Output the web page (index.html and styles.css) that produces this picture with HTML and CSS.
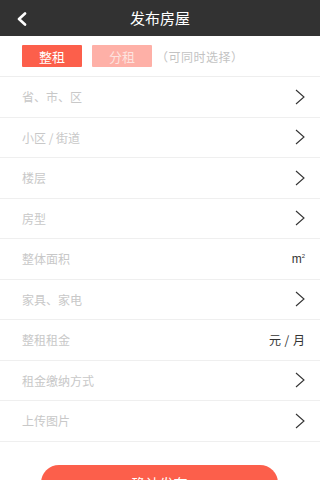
FILE: index.html
```html
<!DOCTYPE html>
<html lang="zh">
<head>
<meta charset="utf-8">
<link rel="stylesheet" href="styles.css">
</head>
<body>
<header class="topbar">
  <span class="back">
    <svg width="12" height="14" viewBox="0 0 12 14"><path d="M9 1.5 L3 7 L9 12.5" fill="none" stroke="#fff" stroke-width="2.6" stroke-linecap="round" stroke-linejoin="round"/></svg>
  </span>
  <h1 class="title">发布房屋</h1>
</header>
<section class="tabs">
  <span class="tab tab-on">整租</span>
  <span class="tab tab-off">分租</span>
  <span class="hint">（可同时选择）</span>
</section>
<ul class="list">
  <li class="row"><span class="label">省、市、区</span><svg class="chev" viewBox="0 0 10 16"><path d="M1 1 L9 8 L1 15" fill="none" stroke="#333" stroke-width="1.1"/></svg></li>
  <li class="row"><span class="label">小区 / 街道</span><svg class="chev" viewBox="0 0 10 16"><path d="M1 1 L9 8 L1 15" fill="none" stroke="#333" stroke-width="1.1"/></svg></li>
  <li class="row"><span class="label">楼层</span><svg class="chev" viewBox="0 0 10 16"><path d="M1 1 L9 8 L1 15" fill="none" stroke="#333" stroke-width="1.1"/></svg></li>
  <li class="row"><span class="label">房型</span><svg class="chev" viewBox="0 0 10 16"><path d="M1 1 L9 8 L1 15" fill="none" stroke="#333" stroke-width="1.1"/></svg></li>
  <li class="row"><span class="label">整体面积</span><span class="unit sq">m<sup>2</sup></span></li>
  <li class="row"><span class="label">家具、家电</span><svg class="chev" viewBox="0 0 10 16"><path d="M1 1 L9 8 L1 15" fill="none" stroke="#333" stroke-width="1.1"/></svg></li>
  <li class="row"><span class="label">整租租金</span><span class="unit">元 / 月</span></li>
  <li class="row"><span class="label">租金缴纳方式</span><svg class="chev" viewBox="0 0 10 16"><path d="M1 1 L9 8 L1 15" fill="none" stroke="#333" stroke-width="1.1"/></svg></li>
  <li class="row"><span class="label">上传图片</span><svg class="chev" viewBox="0 0 10 16"><path d="M1 1 L9 8 L1 15" fill="none" stroke="#333" stroke-width="1.1"/></svg></li>
</ul>
<div class="actions">
  <button class="submit">确认发布</button>
</div>
</body>
</html>
```
FILE: styles.css
```css
* { box-sizing: border-box; }
html, body { margin: 0; padding: 0; }
body {
  width: 320px;
  background: #fff;
  font-family: "Noto Sans CJK SC", "Noto Sans", sans-serif;
  overflow: hidden;
}
.topbar {
  height: 36px;
  background: #323232;
  display: flex;
  align-items: center;
  justify-content: center;
  position: relative;
}
.back {
  position: absolute;
  left: 16px;
  top: 12px;
  display: flex;
}
.title {
  margin: 0;
  color: #fff;
  font-size: 15px;
  font-weight: 400;
  line-height: 36px;
}
.tabs {
  height: 41px;
  display: flex;
  align-items: center;
  padding: 0 0 0 22px;
  gap: 10px;
  border-bottom: 1.5px solid #eeeeee;
}
.tab {
  width: 60px;
  height: 22px;
  display: flex;
  align-items: center;
  justify-content: center;
  color: #fff;
  font-size: 13px;
  border-radius: 1px;
}
.tab-on { background: #fc5f4b; }
.tab-off { background: #feb0a7; color: #fde3df; }
.hint {
  margin-left: -6px;
  color: #c3c3c3;
  font-size: 12px;
  letter-spacing: 0.5px;
}
.list {
  list-style: none;
  margin: 0;
  padding: 0;
}
.row {
  height: 40.5px;
  display: flex;
  align-items: center;
  justify-content: space-between;
  padding: 0 14px 0 22px;
  border-bottom: 1.5px solid #efefef;
}
.label {
  color: #c8c8c8;
  font-size: 12px;
}
.chev {
  width: 10px;
  height: 16px;
  margin-right: 1px;
}
.unit {
  color: #333;
  font-size: 12px;
  margin-right: 1px;
  word-spacing: 1px;
}
.sq {
  font-family: "Liberation Sans", sans-serif;
  font-size: 12px;
  line-height: 1;
}
.sq sup {
  font-size: 6px;
  vertical-align: 5px;
}
.actions {
  display: flex;
  justify-content: center;
  padding-top: 23px;
}
.submit {
  width: 237px;
  height: 36px;
  border: none;
  border-radius: 18px;
  background: #fc5f4b;
  color: #fff;
  font-family: "Noto Sans CJK SC", sans-serif;
  font-size: 14px;
  margin-left: -1px;
}
```
